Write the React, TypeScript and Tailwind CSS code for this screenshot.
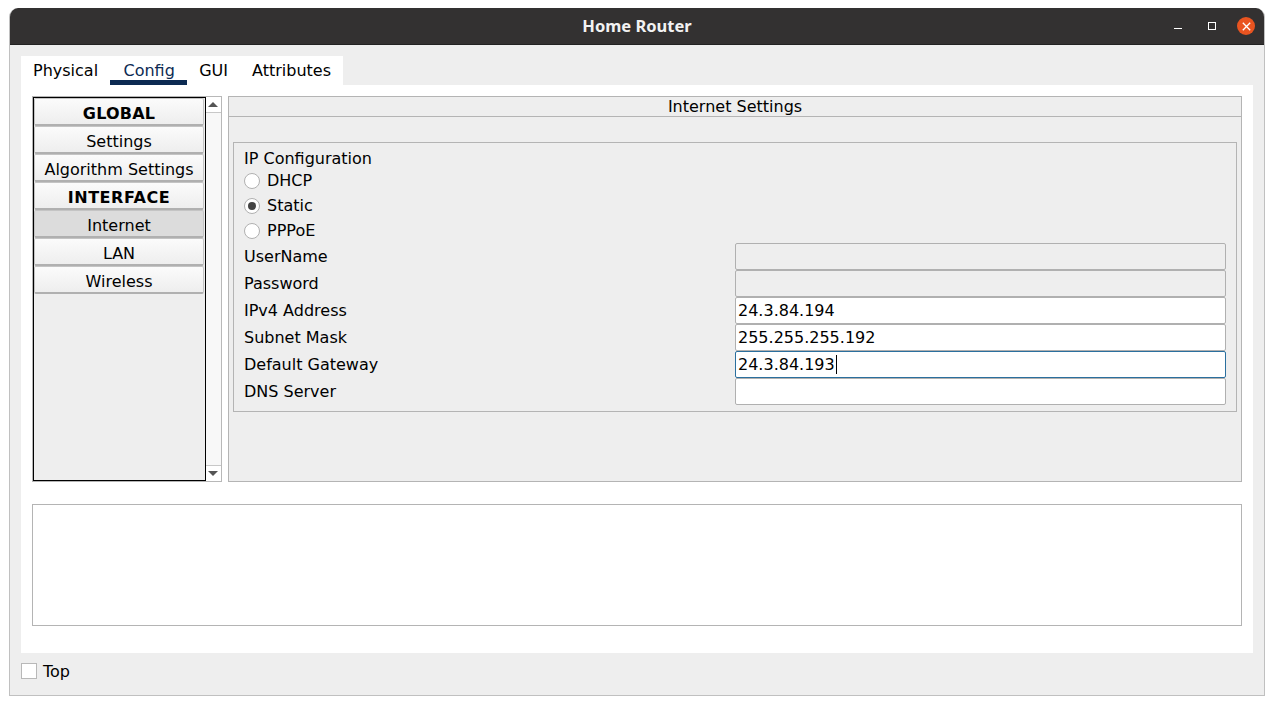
import React from 'react';

const menu = [
  { label: 'GLOBAL', bold: true, track: 'tracking-[0.2px]' },
  { label: 'Settings' },
  { label: 'Algorithm Settings' },
  { label: 'INTERFACE', bold: true, track: 'tracking-[0.55px]' },
  { label: 'Internet', active: true },
  { label: 'LAN' },
  { label: 'Wireless' },
];

const fields = [
  { label: 'UserName', value: '', disabled: true },
  { label: 'Password', value: '', disabled: true },
  { label: 'IPv4 Address', value: '24.3.84.194' },
  { label: 'Subnet Mask', value: '255.255.255.192' },
  { label: 'Default Gateway', value: '24.3.84.193', focused: true },
  { label: 'DNS Server', value: '' },
];

function Radio({ label, checked }: { label: string; checked?: boolean }) {
  return (
    <div className="flex h-[25px] items-center">
      <span className="flex h-4 w-4 items-center justify-center rounded-full border border-[#b0b0b0] bg-white">
        {checked && <span className="h-2 w-2 rounded-full bg-[#444]" />}
      </span>
      <span className="ml-[7px]">{label}</span>
    </div>
  );
}

function Tab({ label, active, className }: { label: string; active?: boolean; className?: string }) {
  return (
    <div className={`flex h-[29px] items-center justify-center ${className} ${active ? 'border-b-[5px] border-[#0c2a52] pt-[5px] text-[#0c2a52]' : ''}`}>
      {label}
    </div>
  );
}

export default function App() {
  return (
    <div className="h-[705px] w-[1274px] overflow-hidden bg-white pl-[9px] pr-[9px] pt-2 font-['DejaVu_Sans',sans-serif] text-base leading-none text-black">
      <div className="flex h-[688px] flex-col overflow-hidden rounded-t-[9px] border-x border-b border-[#c0c0c0] bg-[#eeeeee]">
        <div className="relative flex h-[37px] shrink-0 items-center justify-center border-b border-[#222] bg-[#333131]">
          <span className="pt-px font-['Noto_Sans',sans-serif] text-[16.5px] font-bold text-[#f2f2f2]">Home Router</span>
          <div className="absolute right-[9px] top-[9px] flex items-center">
            <span className="mr-[26px] mt-[4px] h-[1px] w-2 bg-white" />
            <span className="mr-[21px] h-2 w-2 border border-white" />
            <span className="flex h-[18px] w-[18px] items-center justify-center rounded-full bg-[#e95420]">
              <svg width="9" height="9" viewBox="0 0 9 9" stroke="#fff" strokeWidth="1.3">
                <path d="M0.8 0.8 8.2 8.2M8.2 0.8 0.8 8.2" />
              </svg>
            </span>
          </div>
        </div>

        <div className="ml-[11px] mr-[11px] mt-[11px] flex flex-col">
          <div className="flex h-[29px] w-[322px] bg-white">
            <Tab label="Physical" className="pl-3 pr-[12.4px]" />
            <Tab label="Config" active className="pl-[13px] pr-[12.4px]" />
            <Tab label="GUI" className="px-3" />
            <Tab label="Attributes" className="px-3" />
          </div>
          <div className="h-[568px] bg-white px-[11px] pt-[11px]">
            <div className="flex h-[386px]">
              <div className="w-[174px] shrink-0 border border-r-0 border-[#b4b4b4] bg-[#eeeeee]">
                <div className="h-full border border-black">
                  {menu.map((item) => (
                    <div
                      key={item.label}
                      className={`mr-px flex h-[28px] items-center justify-center rounded-[2px] border border-b-2 border-[#c4c4c4] border-b-[#b0b0b0] pt-[4px] ${
                        item.active ? 'bg-[#dcdcdc]' : 'bg-gradient-to-b from-[#fbfbfb] to-[#eeeeee]'
                      } ${item.bold ? 'font-bold' : ''} ${item.track || ''}`}
                    >
                      {item.label}
                    </div>
                  ))}
                </div>
              </div>
              <div className="flex w-4 shrink-0 flex-col justify-between border-y border-r border-[#b8b8b8] bg-[#f8f8f8]">
                <div className="flex h-[16px] items-center justify-center border-b border-[#c8c8c8] bg-white pr-px">
                  <span className="h-0 w-0 border-x-[5px] border-b-[5px] border-x-transparent border-b-[#555]" />
                </div>
                <div className="flex h-[16px] items-center justify-center border-t border-[#c8c8c8] bg-white pr-px">
                  <span className="h-0 w-0 border-x-[5px] border-t-[5px] border-x-transparent border-t-[#555]" />
                </div>
              </div>
              <div className="ml-[6px] flex-1 border border-[#b4b4b4] bg-[#eeeeee]">
                <div className="flex h-5 items-center justify-center border-b border-[#b4b4b4]">Internet Settings</div>
                <div className="mx-1 mt-[25px] h-[270px] border border-[#b4b4b4] px-[10px] pt-[8px]">
                  <div className="flex h-4 items-center">IP Configuration</div>
                  <div className="mt-px">
                    <Radio label="DHCP" />
                    <Radio label="Static" checked />
                    <Radio label="PPPoE" />
                  </div>
                  <div>
                    {fields.map((f) => (
                      <div key={f.label} className="flex h-[27px] items-center justify-between">
                        <span>{f.label}</span>
                        <div
                          className={`flex h-[27px] w-[491px] items-center rounded-[2px] border px-[2px] ${
                            f.focused ? 'border-[#2a6f9e]' : 'border-[#b0b0b0]'
                          } ${f.disabled ? 'bg-[#eeeeee]' : 'bg-white'}`}
                        >
                          {f.value}
                          {f.focused && <span className="ml-px h-[19px] w-px bg-black" />}
                        </div>
                      </div>
                    ))}
                  </div>
                </div>
              </div>
            </div>
            <div className="mt-[22px] h-[122px] border border-[#b4b4b4] bg-white" />
          </div>
          <div className="mt-[10px] flex h-4 items-center">
            <span className="h-4 w-4 border border-[#b8b8b8] bg-white" />
            <span className="ml-[6px] pt-[2px]">Top</span>
          </div>
        </div>
      </div>
    </div>
  );
}
